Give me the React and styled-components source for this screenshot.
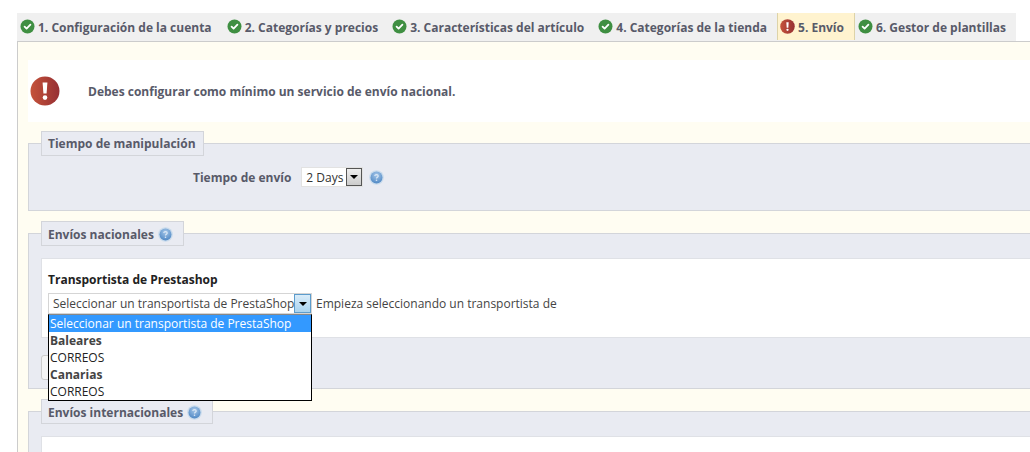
import React from 'react';
import styled, { createGlobalStyle } from 'styled-components';

const GlobalStyle = createGlobalStyle`
  html, body {
    margin: 0;
    padding: 0;
    background: #fff;
    overflow: hidden;
  }
  body {
    font-family: "Open Sans", "Liberation Sans", sans-serif;
    font-size: 12px;
    color: #585a69;
  }
`;

const CheckIcon = () => (
  <svg width="15" height="15" viewBox="0 0 15 15">
    <circle cx="7.5" cy="7.5" r="7" fill="#3f8f42" />
    <path d="M4.6 7.6l2 2 3.8-3.9" fill="none" stroke="#fff" strokeWidth="1.8" strokeLinecap="round" strokeLinejoin="round" />
  </svg>
);

const ErrorIcon = ({ size = 15 }) => (
  <svg width={size} height={size} viewBox="0 0 30 30">
    <defs>
      <linearGradient id={`err${size}`} x1="0" x2="1" y1="0" y2="0">
        <stop offset="0" stopColor="#c5533a" />
        <stop offset="1" stopColor="#962f33" />
      </linearGradient>
    </defs>
    <circle cx="15" cy="15" r="14.5" fill={`url(#err${size})`} />
    <path d="M12.6 6.5h4.8l-.8 11h-3.2z" fill="#fff" />
    <circle cx="15" cy="21.6" r="2.3" fill="#fff" />
  </svg>
);

const HelpIcon = () => (
  <svg width="15" height="15" viewBox="0 0 15 15">
    <defs>
      <radialGradient id="help" cx="0.5" cy="0.3" r="0.75">
        <stop offset="0" stopColor="#a5c6e8" />
        <stop offset="1" stopColor="#4a84c2" />
      </radialGradient>
    </defs>
    <circle cx="7.5" cy="7.5" r="7.3" fill="#c9dbec" />
    <circle cx="7.5" cy="7.5" r="6" fill="url(#help)" />
    <path d="M5.7 6c.2-1 1-1.4 1.8-1.4 1 0 1.7.6 1.7 1.4 0 1.2-1.7 1.2-1.7 2.4" fill="none" stroke="#dbe8f5" strokeWidth="1.2" />
    <circle cx="7.5" cy="10.3" r=".8" fill="#dbe8f5" />
  </svg>
);

const Page = styled.div`
  width: 1030px;
  height: 452px;
  padding: 13px 0 0 17px;
  box-sizing: border-box;
  overflow: hidden;
`;

const Tabs = styled.div`
  display: flex;
  width: 999px;
  height: 28px;
  background: #f0f0f0;
  padding-left: 3px;
  box-sizing: border-box;
`;

const Tab = styled.div`
  display: flex;
  align-items: center;
  gap: 3px;
  height: 27px;
  padding: 0 ${(p) => (p.$active ? '10px 0 2px' : '0')};
  margin-right: ${(p) => p.$gap}px;
  font-weight: 700;
  font-size: 12px;
  color: #585a69;
  white-space: nowrap;
  background: ${(p) => (p.$active ? '#fff3cf' : 'transparent')};
  border-left: ${(p) => (p.$active ? '1px solid #ddd3a8' : 'none')};
  border-right: ${(p) => (p.$active ? '1px solid #ddd3a8' : 'none')};
`;

const TabLabel = styled.span`
  padding-top: 2px;
`;

const Panel = styled.div`
  width: 1013px;
  height: 411px;
  border-top: 1px solid #ccc;
  border-left: 1px solid #ccc;
  background: #fffdf2;
  padding: 18px 0 0 10px;
  box-sizing: border-box;
`;

const Alert = styled.div`
  display: flex;
  align-items: center;
  gap: 28px;
  height: 62px;
  padding-left: 2px;
  background: #fff;
  font-weight: 700;
  font-size: 12px;
  color: #585a69;
  margin-bottom: 9px;
`;

const Section = styled.fieldset`
  margin: 0 0 10px;
  padding: 0 0 0 12px;
  border: 1px solid #d3d5da;
  border-right: none;
  background: #e9ebf2;
  height: ${(p) => p.$height}px;
  box-sizing: border-box;
`;

const SectionTitle = styled.legend`
  display: flex;
  align-items: center;
  gap: 4px;
  height: 25px;
  padding: ${(p) => (p.$help ? '1px 10px 0 6px' : '0 7px 0 6px')};
  box-sizing: border-box;
  background: #e9ebf2;
  border: 1px solid #d3d5da;
  font-weight: 700;
  font-size: 12px;
  color: #585a69;
`;

const Row = styled.div`
  display: flex;
  align-items: center;
  padding: 11px 0 0 152px;
`;

const RowLabel = styled.label`
  font-weight: 700;
  font-size: 12px;
  color: #585a69;
  margin-right: 10px;
`;

const SmallSelect = styled.div`
  display: flex;
  align-items: center;
  justify-content: space-between;
  width: 62px;
  height: 20px;
  padding-left: 4px;
  box-sizing: border-box;
  background: #fff;
  border: 1px solid #e2e2e2;
  color: #333;
  font-size: 12px;
  margin-right: 6px;
`;

const Arrow = styled.span`
  display: flex;
  align-items: center;
  justify-content: center;
  width: ${(p) => (p.$open ? 17 : 16)}px;
  height: ${(p) => (p.$open ? 19 : 18)}px;
  box-sizing: border-box;
  background: ${(p) => (p.$open ? 'linear-gradient(#d9ecf9, #a9d3ef)' : 'linear-gradient(#eee, #ccc)')};
  border: 1px solid ${(p) => (p.$open ? '#5c9ccc' : '#555')};
  &::after {
    content: "";
    border-left: 4px solid transparent;
    border-right: 4px solid transparent;
    border-top: 4px solid #000;
  }
`;

const WhiteBox = styled.div`
  background: #fff;
  margin-top: 12px;
  padding: 12px 6px 0;
  border: 1px solid #dfe1e6;
  border-right: none;
  height: 80px;
  box-sizing: border-box;
`;

const CarrierTitle = styled.div`
  font-weight: 700;
  font-size: 12px;
  color: #222;
  margin-bottom: 5px;
`;

const CarrierRow = styled.div`
  display: flex;
  align-items: center;
  gap: 4px;
  font-size: 12px;
  color: #444;
  white-space: nowrap;
`;

const CarrierSelect = styled.div`
  position: relative;
  display: flex;
  align-items: center;
  justify-content: space-between;
  width: 264px;
  height: 21px;
  padding-left: 4px;
  box-sizing: border-box;
  background: #fff;
  border: 1px solid #d5d5d5;
  color: #444;
`;

const Dropdown = styled.ul`
  position: absolute;
  left: -1px;
  top: 20px;
  z-index: 5;
  width: 264px;
  margin: 0;
  padding: 0;
  list-style: none;
  box-sizing: border-box;
  background: #fff;
  border: 1px solid #000;
  border-top-color: #888;
`;

const Option = styled.li`
  height: 17px;
  line-height: 17px;
  padding-left: 1px;
  font-size: 12px;
  font-weight: ${(p) => (p.$group ? 700 : 400)};
  color: ${(p) => (p.$selected ? '#fff' : p.$group ? '#444' : '#222')};
  background: ${(p) => (p.$selected ? '#3399ff' : '#fff')};
`;

const HiddenButton = styled.div`
  width: 60px;
  height: 25px;
  margin-top: 17px;
  background: #f5f5f5;
  border: 1px solid #ccc;
  border-radius: 3px;
  box-sizing: border-box;
`;

const tabs = [
  { label: '1. Configuración de la cuenta', gap: 15 },
  { label: '2. Categorías y precios', gap: 14 },
  { label: '3. Características del artículo', gap: 14 },
  { label: '4. Categorías de la tienda', gap: 10 },
  { label: '5. Envío', active: true, gap: 3 },
  { label: '6. Gestor de plantillas', gap: 0 },
];

const options = [
  { text: 'Seleccionar un transportista de PrestaShop', selected: true },
  { text: 'Baleares', group: true },
  { text: 'CORREOS' },
  { text: 'Canarias', group: true },
  { text: 'CORREOS' },
];

const App = () => (
  <>
    <GlobalStyle />
    <Page>
      <Tabs>
        {tabs.map((t) => (
          <Tab key={t.label} $active={t.active} $gap={t.gap}>
            {t.active ? <ErrorIcon /> : <CheckIcon />}
            <TabLabel>{t.label}</TabLabel>
          </Tab>
        ))}
      </Tabs>
      <Panel>
        <Alert>
          <ErrorIcon size={30} />
          Debes configurar como mínimo un servicio de envío nacional.
        </Alert>
        <Section $height={80}>
          <SectionTitle>Tiempo de manipulación</SectionTitle>
          <Row>
            <RowLabel>Tiempo de envío</RowLabel>
            <SmallSelect>
              2 Days
              <Arrow />
            </SmallSelect>
            <HelpIcon />
          </Row>
        </Section>
        <Section $height={168}>
          <SectionTitle $help>
            Envíos nacionales <HelpIcon />
          </SectionTitle>
          <WhiteBox>
            <CarrierTitle>Transportista de Prestashop</CarrierTitle>
            <CarrierRow>
              <CarrierSelect>
                Seleccionar un transportista de PrestaShop
                <Arrow $open />
                <Dropdown>
                  {options.map((o, i) => (
                    <Option key={i} $selected={o.selected} $group={o.group}>
                      {o.text}
                    </Option>
                  ))}
                </Dropdown>
              </CarrierSelect>
              Empieza seleccionando un transportista de
            </CarrierRow>
          </WhiteBox>
          <HiddenButton />
        </Section>
        <Section $height={100}>
          <SectionTitle $help>
            Envíos internacionales <HelpIcon />
          </SectionTitle>
          <WhiteBox />
        </Section>
      </Panel>
    </Page>
  </>
);

export default App;
